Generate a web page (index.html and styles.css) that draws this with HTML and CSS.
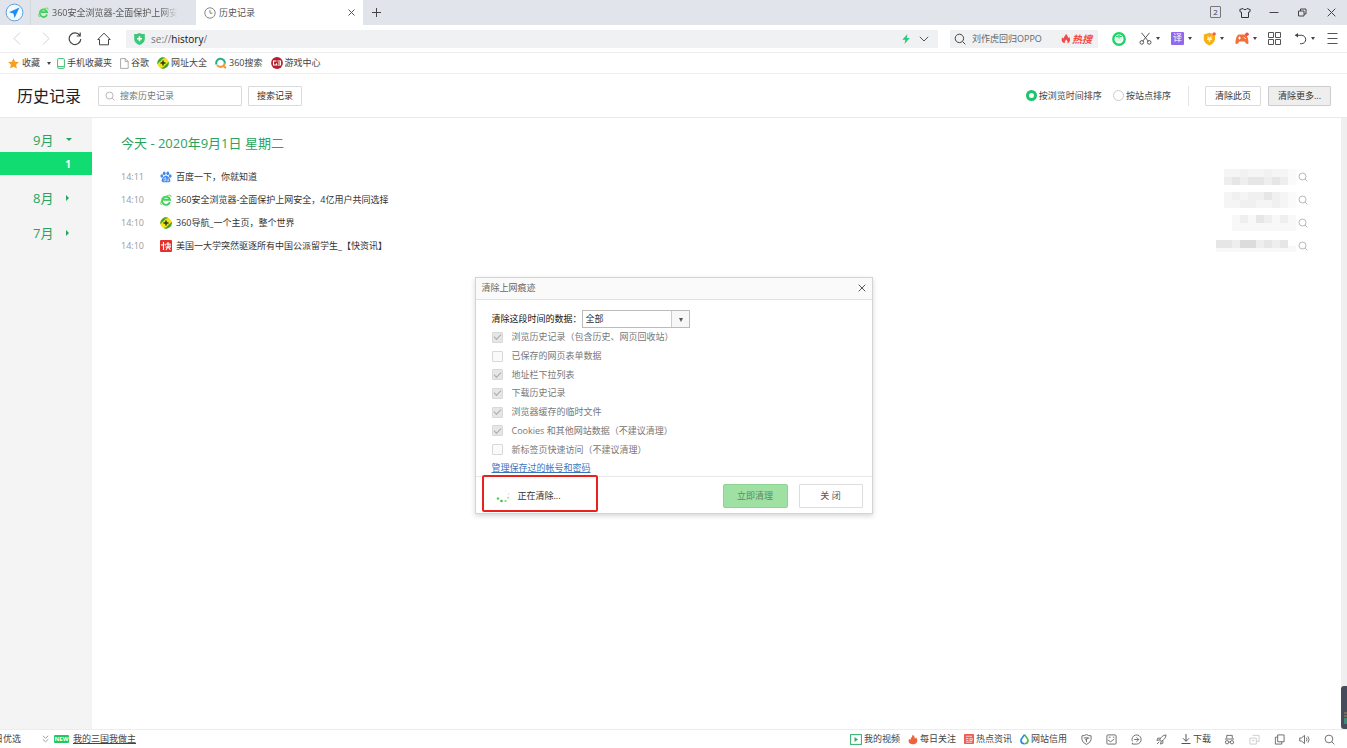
FILE: index.html
```html
<!DOCTYPE html>
<html lang="zh-CN">
<head>
<meta charset="utf-8">
<title>历史记录</title>
<link rel="stylesheet" href="styles.css">
</head>
<body>
<svg class="defs" aria-hidden="true">
  <symbol id="mag" viewBox="0 0 12 12"><circle cx="5.4" cy="5.4" r="4.2" fill="none" stroke="currentColor"/><path d="M8.5 8.5l2.8 2.8" stroke="currentColor"/></symbol>
  <symbol id="e-logo" viewBox="0 0 12 12"><path d="M9.9 8.2A4.1 4.1 0 1 1 10 5.7H3.2" fill="none" stroke="#3fd05c" stroke-width="1.9"/><path d="M2.2 10.5C-.8 11.300.6 6.500 5.200 3.100 8.500.5 11.800.4 10.800 3" fill="none" stroke="#69d94c" stroke-width="1"/></symbol>
  <symbol id="nav360" viewBox="0 0 12 12"><circle cx="6" cy="6" r="5.7" fill="#f5df1b"/><path d="M.5 7.500A5.700 5.700 0 0 1 8.500 1C5 1.200 5 3 3 4.500 1.500 5.500 1 6.500.5 7.500zM11.600 4.500A5.700 5.700 0 0 1 3.500 11C7 10.800 7 9 9 7.500 10.500 6.500 11 5.500 11.600 4.500z" fill="#35a63a"/><path d="M6 3.500v5M3.500 6h5" stroke="#243c18" stroke-width="1.500"/></symbol>
  <symbol id="fire" viewBox="0 0 12 12"><path d="M6 .3C7 2 8.500 3.500 8.600 5.300L9.900 4.200C12 7.500 10.500 11.200 7.500 11.700 8.500 10 7.500 8.500 6 7.300 5.500 9 4 9.800 4.600 11.700 1 11.200-.2 7.500 1.600 4.800L3.200 6C3.200 3.500 5.800 2.800 6 .3z" fill="currentColor"/></symbol>
  <symbol id="flame" viewBox="0 0 12 12"><path d="M5.500.3C7.500 1.500 8.200 3.200 8.200 5L9.900 3.700C12.500 7 11 11.600 6 11.700 1 11.600-.5 8 1.600 5.500L3 6.200C3 4 5.500 3 5.500.3z" fill="currentColor"/></symbol>
</svg>

<header class="tabs">
  <button class="logo" aria-label="主菜单"><svg width="19" height="19" viewBox="0 0 19 19"><circle cx="9.500" cy="9.500" r="8.400" fill="#f4f9fd" stroke="#5ba2dc"/><path d="M14.500 4.500L4 9.300l4.400 1.300 1.200 4.400z" fill="#218ef0"/></svg></button>
  <div class="tab"><svg width="11" height="11"><use href="#e-logo"/></svg><span class="fade">360安全浏览器-全面保护上网安</span></div>
  <div class="tab active"><svg width="12" height="12" viewBox="0 0 12 12" fill="none" stroke="#888"><circle cx="6" cy="6" r="5.200"/><path d="M6 3v3.200h2.500"/></svg><span>历史记录</span>
    <button class="tabclose" aria-label="关闭标签"><svg width="7" height="7" viewBox="0 0 7 7" stroke="#555"><path d="M.5.5l6 6M6.500.5l-6 6"/></svg></button></div>
  <button class="newtab" aria-label="新标签"><svg width="11" height="11" viewBox="0 0 11 11" stroke="#444"><path d="M5.500 1v9M1 5.500h9"/></svg></button>
  <div class="wins">
    <button class="count">2</button>
    <button aria-label="皮肤"><svg width="12" height="12" viewBox="0 0 12 12" fill="none" stroke="#333"><path d="M4 1.500C4.500 3 7.500 3 8 1.500L11.200 2.500 10.800 5 9.500 5.200V10.500h-7V5.200L1.200 5 .8 2.500z"/></svg></button>
    <button aria-label="最小化"><svg width="10" height="10" viewBox="0 0 10 10" stroke="#444"><path d="M.5 4.500h9"/></svg></button>
    <button aria-label="还原"><svg width="9" height="9" viewBox="0 0 9 9" fill="none" stroke="#444"><path d="M.5 3h5.500v5H.5zM2.500 3V1H8v5H6"/></svg></button>
    <button aria-label="关闭"><svg width="9" height="9" viewBox="0 0 9 9" stroke="#444"><path d="M.7.7l7.600 7.600M8.300.7L.7 8.300"/></svg></button>
  </div>
</header>

<nav class="toolbar">
  <div class="navs">
    <button aria-label="后退"><svg width="8" height="13" viewBox="0 0 8 13" fill="none" stroke="#d2d2d2"><path d="M7 .5l-6 6 6 6"/></svg></button>
    <button aria-label="前进"><svg width="8" height="13" viewBox="0 0 8 13" fill="none" stroke="#d2d2d2"><path d="M1 .5l6 6-6 6"/></svg></button>
    <button aria-label="刷新"><svg width="14" height="14" viewBox="0 0 14 14" fill="none" stroke="#444"><path d="M11.800 3.500A5.800 5.800 0 1 0 12.800 7M12.200.5v3.500H8.700" stroke-width="1.200"/></svg></button>
    <button aria-label="主页"><svg width="14" height="14" viewBox="0 0 14 14" fill="none" stroke="#444"><path d="M.8 7.500L7 1.200l6.200 6.300H11.500v5.300h-9V7.500z"/></svg></button>
  </div>
  <div class="address">
    <svg width="11" height="12" viewBox="0 0 11 12"><path d="M5.500 0C7 1 9 1 10.800 1V6.500C10.500 9.500 8 11.300 5.500 12 3 11.300.5 9.500.2 6.500V1C2 1 4 1 5.500 0z" fill="#3cc878"/><path d="M5.500 3.200v5M3 5.700h5" stroke="#fff" stroke-width="1.600"/></svg>
    <div class="url" role="textbox" aria-label="地址">se://<b>history</b>/</div>
    <svg width="8" height="10" viewBox="0 0 8 10"><path d="M5.500 0L.3 5.800H3.300L2.500 10 7.700 4H4.700z" fill="#22cf77"/></svg>
    <svg class="chev" width="10" height="6" viewBox="0 0 10 6" fill="none" stroke="#555"><path d="M.8.8L5 5 9.200.8"/></svg>
  </div>
  <div class="find">
    <svg width="12" height="12"><use href="#mag"/></svg>
    <input aria-label="搜索" value="刘作虎回归OPPO">
    <a href="#" class="hot"><svg width="10" height="11"><use href="#fire"/></svg>热搜</a>
  </div>
  <div class="tools">
    <button class="gift" aria-label="购物"><svg width="14" height="14" viewBox="0 0 14 14"><circle cx="7" cy="7" r="5.700" fill="#fff" stroke="#1fd468" stroke-width="2.400"/><path d="M4.200 4.800h5.600v4.700H4.200z" fill="#d9f7e4"/><path d="M4 4.500h2.500V3.300M10 4.500H7.500V3.300M7 4.500v2" fill="none" stroke="#1fd468"/></svg></button>
    <button class="tool" aria-label="截图"><svg width="13" height="13" viewBox="0 0 13 13" fill="none" stroke="#555"><path d="M2.500.8l6.800 8.400M10.500.8L3.700 9.200"/><circle cx="2.800" cy="10.400" r="1.800"/><circle cx="10.200" cy="10.400" r="1.800"/></svg><i class="caret"></i></button>
    <button class="tool" aria-label="翻译"><span class="trans">译</span><i class="caret"></i></button>
    <button class="tool" aria-label="安全"><svg width="13" height="14" viewBox="0 0 13 14"><path d="M6.500.8L12 2.500V7.500C11.500 10.500 9 12.500 6.500 13.500 4 12.500 1 10.500.8 7.500V2.500z" fill="#f9b016"/><path d="M4 4.500h1.500L6.500 6l1-1.500H9L7.800 6.500H9V8H7.200v1.800H5.800V8H4V6.500h1.200z" fill="#fff3c4"/><circle cx="11.200" cy="1.900" r="1.700" fill="#f2604f"/></svg><i class="caret"></i></button>
    <button class="tool" aria-label="游戏"><svg width="14" height="13" viewBox="0 0 14 13"><path d="M3.500 2.500H10.500C12.800 4 13.500 8 13.500 11.500 12 13 10.500 11 9.500 9.500H4.500C3.500 11 2 13 .5 11.500.5 8 1.200 4 3.500 2.500z" fill="#f2713a"/><path d="M3 6h3M4.500 4.500v3M9 5.200l1.800 1.800" stroke="#fff" stroke-width=".9"/><circle cx="12" cy="2.200" r="1.800" fill="#f24b42"/></svg><i class="caret"></i></button>
    <button class="grid" aria-label="扩展"><svg width="13" height="13" viewBox="0 0 13 13" fill="none" stroke="#555"><path d="M.5.5h5v5h-5zM7.500.5h5v5h-5zM.5 7.500h5v5h-5zM7.500 7.500h5v5h-5z"/></svg></button>
    <button class="tool" aria-label="撤销"><svg width="13" height="13" viewBox="0 0 13 13" fill="none" stroke="#444"><path d="M1.500 3.300H7.500a4.200 4.200 0 0 1 0 8.400H6"/><path d="M4 1L.8 3.300 4 5.600z" fill="#444" stroke="none"/></svg><i class="caret"></i></button>
    <button class="menu" aria-label="菜单"><svg width="11" height="11" viewBox="0 0 11 11" stroke="#555"><path d="M.5.5h10M.5 5.500h10M.5 10.500h10"/></svg></button>
  </div>
</nav>

<nav class="marks">
  <a href="#"><svg width="11" height="11" viewBox="0 0 11 11"><path d="M5.500.2l1.600 3.500 3.800.4-2.800 2.600.8 3.900-3.400-1.900-3.400 1.900.8-3.900L.1 4.100l3.800-.4z" fill="#f7a020"/></svg>收藏 <i class="caret"></i></a>
  <a href="#"><svg width="8" height="11" viewBox="0 0 8 11" fill="none" stroke="#41bd76"><rect x=".6" y=".6" width="6.800" height="9.800" rx="1"/><path d="M1 8.600h6"/></svg>手机收藏夹</a>
  <a href="#"><svg width="9" height="11" viewBox="0 0 9 11" fill="none" stroke="#aaa"><path d="M.6.6h4.800l2.800 2.800v7H.6zM5.200.6v3h3"/></svg>谷歌</a>
  <a href="#"><svg width="12" height="12"><use href="#nav360"/></svg>网址大全</a>
  <a href="#"><svg width="12" height="12" viewBox="0 0 12 12" fill="none" stroke-width="2"><path d="M1.500 7.500A4.300 4.300 0 1 1 9.800 6.500" stroke="#25ad86"/><path d="M9.800 6A4.300 4.300 0 0 1 2 8M8.700 9L11 11.200" stroke="#f39b39"/></svg>360搜索</a>
  <a href="#"><svg width="12" height="12" viewBox="0 0 12 12" fill="none" stroke="#fff"><circle cx="6" cy="6" r="5.900" fill="#b51f2c" stroke="none"/><path d="M5.500 4H2.500v4h3V6.300M6.500 4h3v4h-3M7 6h2.500" stroke-width="1.100"/></svg>游戏中心</a>
</nav>

<section class="head">
  <h1>历史记录</h1>
  <label class="hsearch"><svg width="10" height="10"><use href="#mag"/></svg><input placeholder="搜索历史记录" aria-label="搜索历史记录"></label>
  <button class="btn find-btn">搜索记录</button>
  <div class="sorts">
    <label><input type="radio" name="sort" checked>按浏览时间排序</label>
    <label><input type="radio" name="sort">按站点排序</label>
  </div>
  <div class="clears"><button class="btn">清除此页</button><button class="btn more">清除更多...</button></div>
</section>

<main>
  <aside class="side">
    <button class="month">9月<i class="down"></i></button>
    <button class="day">1</button>
    <button class="month later">8月<i class="right"></i></button>
    <button class="month later">7月<i class="right"></i></button>
  </aside>
  <section class="list">
    <h2>今天 - 2020年9月1日 星期二</h2>
    <ul>
      <li><time>14:11</time><svg width="12" height="12" viewBox="0 0 12 12" fill="#4189ea"><ellipse cx="4.200" cy="2.300" rx="1.400" ry="1.900"/><ellipse cx="7.800" cy="2.300" rx="1.400" ry="1.900"/><ellipse cx="1.800" cy="5" rx="1.400" ry="1.700"/><ellipse cx="10.200" cy="5" rx="1.400" ry="1.700"/><path d="M6 4.500C8 4.800 10.700 8 10.400 9.800 9.900 11.900 7.500 11.200 6 11.200S2.100 11.900 1.600 9.800C1.300 8 4 4.800 6 4.500z"/><path d="M5.500 7H4v3h1.500V6M7 7.500V10h1.500V7.500" fill="none" stroke="#fff" stroke-width=".5"/></svg><a href="#">百度一下，你就知道</a>
        <svg class="mosaic" width="80" height="16" viewBox="0 0 80 16"><path fill="#f5f5f5" d="M8 0h64v8H8z"/><path fill="#eee" d="M8 8h64v8H8z"/><path fill="#f1f1f1" d="M24 0h8v8h-8zM48 0h8v8h-8z"/><path fill="#e6e6e6" d="M16 8h8v8h-8zM32 8h16v8H32zM56 8h8v8h-8z"/><path fill="#fafafa" d="M72 0h8v16h-8z"/></svg><button aria-label="搜索"><svg width="10" height="10"><use href="#mag"/></svg></button></li>
      <li><time>14:10</time><svg width="12" height="12"><use href="#e-logo"/></svg><a href="#">360安全浏览器-全面保护上网安全，4亿用户共同选择</a>
        <svg class="mosaic" width="80" height="16" viewBox="0 0 80 16"><path fill="#f5f5f5" d="M8 0h64v16H8z"/><path fill="#f0f0f0" d="M16 0h8v8h-8zM32 0h16v8H32zM56 0h8v8h-8zM24 8h16v8H24zM56 8h8v8h-8z"/><path fill="#e6e6e6" d="M48 0h8v8h-8z"/><path fill="#fafafa" d="M72 0h8v16h-8z"/></svg><button aria-label="搜索"><svg width="10" height="10"><use href="#mag"/></svg></button></li>
      <li><time>14:10</time><svg width="12" height="12"><use href="#nav360"/></svg><a href="#">360导航_一个主页，整个世界</a>
        <svg class="mosaic" width="80" height="16" viewBox="0 0 80 16"><path fill="#f8f8f8" d="M16 0h64v16H16z"/><path fill="#efefef" d="M24 0h8v8h-8zM48 0h8v8h-8zM64 0h8v8h-8z"/><path fill="#e6e6e6" d="M40 0h8v8h-8z"/></svg><button aria-label="搜索"><svg width="10" height="10"><use href="#mag"/></svg></button></li>
      <li><time>14:10</time><svg width="12" height="12" viewBox="0 0 12 12"><rect width="12" height="12" rx="1" fill="#e2322d"/><path d="M3.500 2v8M2 4v2M5 4l.5 1.500M6 4h4v3M5.500 7H11M8 2v4.500L6 10M8.500 7.500L10.500 10" fill="none" stroke="#fff" stroke-width="1.100"/></svg><a href="#">美国一大学突然驱逐所有中国公派留学生_【快资讯】</a>
        <svg class="mosaic" width="80" height="16" viewBox="0 0 80 16"><path fill="#f8f8f8" d="M0 8h80v6H0z"/><path fill="#e6e6e6" d="M0 2h16v8H0zM32 2h8v8h-8zM48 2h8v8h-8zM64 2h8v8h-8z"/><path fill="#eee" d="M16 2h8v8h-8zM40 2h8v8h-8zM56 2h8v8h-8z"/><path fill="#dcdcdc" d="M24 2h16v8H24z"/></svg><button aria-label="搜索"><svg width="10" height="10"><use href="#mag"/></svg></button></li>
    </ul>
  </section>
  <div class="scroll"><svg class="meter" width="6" height="43" viewBox="0 0 6 43"><path d="M6 0H3Q0 0 0 3v37q0 3 3 3h3z" fill="#454c5b"/><path d="M3 27h3M3 30h3" stroke="#ae8c58"/><path d="M3 33h3M3 35h3M3 37h3" stroke="#38c69b"/></svg></div>
</main>

<footer class="status">
  <span class="cut">日优选</span>
  <svg class="fold" width="7" height="8" viewBox="0 0 7 8" fill="none" stroke="#888" stroke-width=".8"><path d="M.8.8l2.700 2.500L6.200.8M.8 4.300l2.700 2.500 2.700-2.500"/></svg>
  <span class="new">NEW</span><a class="news" href="#">我的三国我做主</a>
  <div class="feeds">
    <a href="#"><svg width="12" height="11" viewBox="0 0 12 11"><rect x=".6" y=".6" width="10.800" height="9.800" fill="none" stroke="#2fae68"/><path d="M4.500 3v5l3.500-2.500z" fill="#2fae68"/></svg>我的视频</a>
    <a href="#"><svg class="flame" width="10" height="11"><use href="#flame"/></svg>每日关注</a>
    <a href="#"><svg width="10" height="10" viewBox="0 0 11 11"><rect width="11" height="11" rx="1" fill="#f05850"/><path d="M2 2.500h7M2 5h3M2 7h3M2 9h7M6.500 4.800h2.500v2.500H6.500z" fill="none" stroke="#fff" stroke-width=".8"/></svg>热点资讯</a>
    <a href="#"><svg width="9" height="12" viewBox="0 0 10 12"><path d="M5 1.200C6.500 3.800 9 5.500 9 7.800a4 4 0 0 1-4 3.500" fill="none" stroke="#4db854" stroke-width="1.800"/><path d="M5 1.200C3.500 3.800 1 5.500 1 7.800a4 4 0 0 0 4 3.500" fill="none" stroke="#2589e5" stroke-width="1.800"/></svg>网站信用</a>
  </div>
  <div class="icons">
    <button aria-label="防护"><svg viewBox="0 0 12 12"><path d="M6 .6Q8 2 11 2V6Q10.500 9.500 6 11.400 1.500 9.500 1 6V2Q4 2 6 .6zM3 4.500q3-1 6 0M4.500 6.500L8 4.500M6 5v4"/></svg></button>
    <button aria-label="图片"><svg viewBox="0 0 12 12"><rect x="1" y="1" width="10" height="10" rx="1"/><path d="M2 6.500L5 8.500l4-3M3 3.500h2M7.500 3.500h1.500"/></svg></button>
    <button aria-label="加速"><svg viewBox="0 0 12 12"><path d="M1.500 9.500V11H6A5 5 0 1 0 1.500 8M3.500 6h5M6 3.500L8.500 6 6 8.500"/></svg></button>
    <button aria-label="火箭"><svg viewBox="0 0 12 12"><path d="M11 1Q6 1.500 4 6.500L5.500 8Q10.500 6 11 1zM4.500 4.500H2L1 7l3-.5M7.500 7.500V10L5 11l.5-3M1 11l2.500-2.500"/></svg></button>
  </div>
  <a class="down-link" href="#"><svg width="10" height="10" viewBox="0 0 10 10" fill="none" stroke="#555"><path d="M5 0v7M2 4.300l3 3 3-3M.5 9.500h9"/></svg>下载</a>
  <div class="icons">
    <button aria-label="无痕"><svg viewBox="0 0 12 12"><path d="M3 5V1.500h6V5M1 5.500h10"/><circle cx="3.300" cy="9" r="1.800"/><circle cx="8.700" cy="9" r="1.800"/><path d="M5 8.700h2"/></svg></button>
    <button class="dim" aria-label="静音"><svg viewBox="0 0 12 12"><path d="M4 1.500h7V8H8M1 4.500h7V11H1zM3 7h3"/></svg></button>
    <button aria-label="窗口"><svg viewBox="0 0 12 12"><path d="M4 1h7v7.500H4zM4 3.500H1.500V11H8.500V8.500"/></svg></button>
    <button aria-label="声音"><svg viewBox="0 0 12 12"><path d="M.8 4.300h2L6 1.500v9L2.800 7.700h-2zM8 4q1.500 2 0 4M9.700 2.500q2.600 3.500 0 7"/></svg></button>
    <button aria-label="缩放"><svg viewBox="0 0 12 12"><use href="#mag"/></svg></button>
  </div>
</footer>

<div class="dialog" role="dialog" aria-labelledby="dt">
  <div class="dhead"><span id="dt">清除上网痕迹</span><button aria-label="关闭"><svg width="8" height="8" viewBox="0 0 8 8" stroke="#555"><path d="M.7.7l6.600 6.600M7.300.7L.7 7.300"/></svg></button></div>
  <div class="dbody">
    <div class="range"><label for="range">清除这段时间的数据：</label><span class="pick"><select id="range"><option>全部</option></select></span></div>
    <div class="opts">
      <label class="opt"><input type="checkbox" checked disabled>浏览历史记录（包含历史、网页回收站）</label>
      <label class="opt"><input type="checkbox" disabled>已保存的网页表单数据</label>
      <label class="opt"><input type="checkbox" checked disabled>地址栏下拉列表</label>
      <label class="opt"><input type="checkbox" checked disabled>下载历史记录</label>
      <label class="opt"><input type="checkbox" checked disabled>浏览器缓存的临时文件</label>
      <label class="opt"><input type="checkbox" checked disabled>Cookies 和其他网站数据（不建议清理）</label>
      <label class="opt"><input type="checkbox" disabled>新标签页快速访问（不建议清理）</label>
    </div>
    <a class="manage" href="#">管理保存过的帐号和密码</a>
  </div>
  <div class="dfoot">
    <div class="busy"><svg width="14" height="14" viewBox="0 0 14 14"><circle cx="2" cy="9.500" r="1.300" fill="#55cf55"/><circle cx="5.500" cy="12" r="1.300" fill="#48bd48"/><circle cx="9.500" cy="12" r="1.100" fill="#79d879"/><circle cx="12" cy="8.800" r="1" fill="#9fe59f"/><circle cx="12.500" cy="5" r=".8" fill="#c5edc5"/><circle cx="10" cy="2" r=".6" fill="#dcf3dc"/></svg>正在清除...</div>
    <button class="go" disabled>立即清理</button><button class="close">关 闭</button>
  </div>
</div>
</body>
</html>
```
FILE: styles.css
```css
* { box-sizing: border-box; }
body {
  margin: 0;
  min-height: 100vh;
  display: flex;
  flex-direction: column;
  position: relative;
  overflow-x: hidden;
  background: #fff;
  color: #444;
  font: 9px/12px "Open Sans", "Noto Sans CJK SC", sans-serif;
}
.defs { position: absolute; width: 0; height: 0; }
svg { flex: none; display: block; }
button, input, select { font: inherit; color: inherit; background: none; border: 0; padding: 0; margin: 0; }
button { display: flex; align-items: center; justify-content: center; white-space: nowrap; }
a { color: inherit; text-decoration: none; }
h1, h2, ul { margin: 0; padding: 0; font-weight: 400; }
.caret { border: 2px solid transparent; border-top: 3px solid #444; border-bottom: 0; }

.tabs { display: flex; height: 25px; background: #e1e5eb; align-items: stretch; }
.logo { width: 31px; padding-right: 2px; border-right: 1px solid #d3d8df; }
.tab { width: 165px; display: flex; align-items: center; gap: 3px; padding-left: 7px; color: #555; overflow: hidden; }
.tab span { white-space: nowrap; }
.fade { -webkit-mask-image: linear-gradient(90deg, #000 85%, transparent); mask-image: linear-gradient(90deg, #000 85%, transparent); }
.active { width: 167px; background: #fff; padding: 0 8px; }
.tabclose { margin-left: auto; }
.newtab { width: 27px; }
.wins { margin-left: auto; display: flex; padding-right: 1px; }
.wins button { width: 29px; }
.wins .count { width: 11px; height: 12px; margin: 6px 9px; border: 1px solid #777; border-radius: 1px; font-size: 8px; }

.toolbar { display: flex; align-items: center; height: 28px; border-bottom: 1px solid #eee; }
.navs { display: flex; padding: 0 8px 0 2px; }
.navs button { width: 29px; height: 18px; }
.address { flex: 1; display: flex; align-items: center; height: 18px; padding: 0 9px 0 8px; background: #f0f1f3; }
.url { flex: 1; margin-left: 6px; font-size: 10px; color: #777; }
.url b { font-weight: 400; color: #111; }
.chev { margin-left: 9px; }
.find { width: 148px; height: 18px; margin-left: 12px; padding: 0 6px 0 4px; display: flex; align-items: center; background: #f0f1f3; }
.find input { flex: 1; min-width: 0; margin-left: 6px; color: #666; }
.hot { display: flex; align-items: center; gap: 1px; color: #f24a44; font-size: 10px; font-weight: 700; font-style: italic; }
.tools { display: flex; align-items: center; }
.gift { width: 41px; }
.tool { width: 32px; gap: 4px; justify-content: flex-start; }
.trans { width: 13px; height: 13px; background: #9168ee; color: #fff; border-radius: 1px; }
.grid { width: 27px; justify-content: flex-start; padding-left: 1px; }
.menu { width: 21px; justify-content: flex-start; padding-left: 1px; }

.marks { display: flex; align-items: center; gap: 8px; height: 21px; padding-left: 8px; border-bottom: 1px solid #eee; }
.marks a { display: flex; align-items: center; gap: 2px; }
.marks a:first-child { gap: 3px; }
.marks .caret { margin: 0 -2px 0 4px; }

.head { display: flex; align-items: center; height: 44px; padding: 0 16px 0 17px; border-bottom: 1px solid #eaeaea; }
h1 { font-size: 16px; line-height: 24px; color: #222; }
.hsearch { display: flex; align-items: center; width: 144px; height: 20px; margin-left: 17px; padding-left: 6px; border: 1px solid #d8d8d8; border-radius: 1px; color: #aaa; }
.hsearch input { flex: 1; min-width: 0; margin-left: 5px; color: #555; }
.hsearch input::placeholder { color: #777; }
.btn { height: 20px; padding: 0 9px; border: 1px solid #dadada; border-radius: 1px; background: #fff; color: #333; }
.find-btn { margin-left: 6px; padding: 0 8px; }
.sorts { display: flex; align-items: center; gap: 11px; margin-left: auto; padding-right: 17px; border-right: 1px solid #e4e4e4; height: 20px; }
.sorts label { display: flex; align-items: center; gap: 2px; }
.sorts input { appearance: none; width: 11px; height: 11px; border: 1px solid #ccc; border-radius: 50%; background: #fff; }
.sorts input:checked { border: 3px solid #1ac56b; }
.clears { display: flex; gap: 7px; margin-left: 16px; }
.more { background: #eee; border-color: #ccc; }

main { flex: 1; display: flex; }
.side { width: 92px; padding-top: 11px; background: #f4f4f4; }
.month { width: 100%; height: 23px; padding: 0 0 2px 33px; justify-content: flex-start; font-size: 13px; line-height: 20px; color: #28a45c; }
.later { margin-top: 12px; }
.down, .right { margin-left: 13px; border: 3px solid transparent; }
.down { border-top-color: #28a45c; border-bottom: 0; }
.right { border-left-color: #28a45c; border-right: 0; }
.day { width: 100%; height: 23px; padding-right: 21px; justify-content: flex-end; background: #10dc72; color: #fff; font-size: 10px; font-weight: 700; }
.list { flex: 1; padding: 15px 33px 0 29px; }
h2 { font-size: 13px; line-height: 20px; margin-bottom: 12px; color: #28a45c; }
.list ul { list-style: none; }
.list li { display: flex; align-items: center; height: 23px; }
.list time { width: 39px; color: #999; }
.list li a { margin-left: 4px; color: #333; }
.mosaic { margin-left: auto; }
.list li button { margin-left: 2px; color: #aaa; }
.scroll { width: 6px; background: #efefef; display: flex; align-items: flex-end; }

.status { display: flex; align-items: center; height: 19px; border-top: 1px solid #ececec; }
.cut { margin-left: -6px; }
.fold { margin: 0 5px 0 21px; }
.new { width: 15px; height: 8px; line-height: 8px; background: #1ecb60; color: #fff; font-size: 6px; font-weight: 700; text-align: center; border-radius: 1px; }
.news { margin-left: 4px; text-decoration: underline; }
.feeds { display: flex; gap: 8px; margin-left: auto; margin-right: 7px; }
.feeds a, .down-link { display: flex; align-items: center; gap: 2px; }
.flame { color: #f0603d; }
.icons { display: flex; color: #666; }
.icons button { width: 25px; height: 18px; }
.icons svg { width: 11px; height: 11px; fill: none; stroke: currentColor; stroke-width: 1; }
.icons .dim { color: #ccc; }
.icons:last-child { padding-right: 5px; }
.down-link { margin: 0 6px 0 7px; }

.dialog { position: absolute; top: 277px; left: calc(50% - 199px); width: 398px; background: #fff; border: 1px solid #d4d4d4; box-shadow: 0 2px 5px rgba(0, 0, 0, .16); color: #777; }
.dhead { display: flex; align-items: flex-start; justify-content: space-between; height: 22px; padding: 4px 6px; background: #fafafa; border-bottom: 1px solid #e0e0e0; color: #666; }
.dhead button { height: 12px; }
.dbody { padding: 10px 16px 2px; }
.range { display: flex; align-items: center; height: 18px; color: #111; }
.range label { width: 90px; white-space: nowrap; }
.pick { display: flex; position: relative; width: 108px; height: 18px; border: 1px solid #bbb; color: #333; }
.pick select { appearance: none; flex: 1; padding-left: 3px; }
.pick::before { content: ""; position: absolute; right: 0; top: 0; width: 17px; height: 16px; border-left: 1px solid #ccc; background: #f7f7f7; pointer-events: none; }
.pick::after { content: ""; position: absolute; right: 6px; top: 7px; border: 2px solid transparent; border-top: 4px solid #555; border-bottom: 0; pointer-events: none; }
.opts { display: grid; grid-template-rows: repeat(7, 1fr); height: 131px; }
.opt { display: flex; align-items: center; gap: 9px; }
.opt input { appearance: none; width: 11px; height: 11px; border: 1px solid #d8d8d8; border-radius: 1px; background: #fafafa; display: grid; place-items: center; }
.opt input:checked { background: #e6e6e6; }
.opt input:checked::before { content: ""; width: 6px; height: 3px; margin-bottom: 2px; border: solid #aaa; border-width: 0 0 1px 1px; rotate: -45deg; }
.manage { display: block; margin-top: 3px; color: #3b76bd; text-decoration: underline; width: max-content; }
.dfoot { position: relative; display: flex; align-items: center; justify-content: flex-end; gap: 11px; height: 37px; padding: 2px 9px 0 0; border-top: 1px solid #e8e8e8; }
.busy { position: absolute; left: 6px; top: -2px; width: 116px; height: 37px; display: flex; align-items: center; gap: 8px; padding: 4px 0 0 12px; border: 2px solid #e8231d; border-radius: 2px; color: #333; }
.go { width: 65px; height: 24px; background: #9fe0a3; border: 1px solid #8ed394; border-radius: 2px; color: #5d8a61; }
.close { width: 64px; height: 24px; border: 1px solid #ddd; border-radius: 1px; color: #555; }
```
